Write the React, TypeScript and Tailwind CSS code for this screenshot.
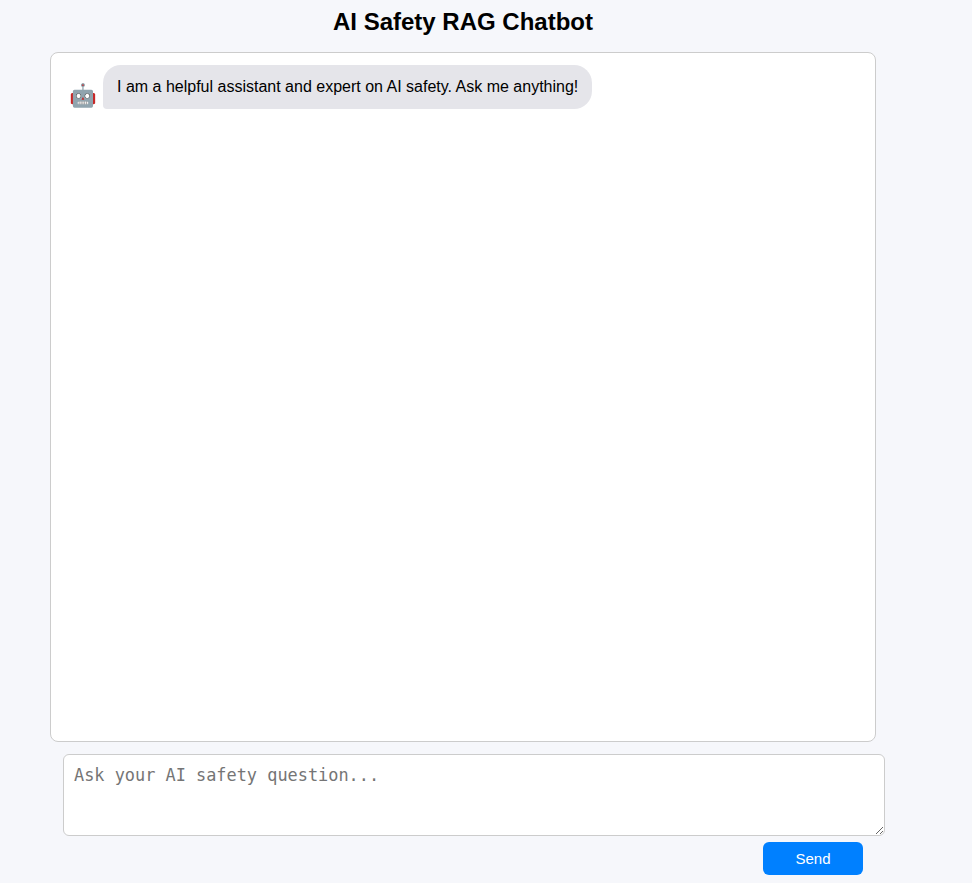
export default function App() {
  return (
    <div className="h-[883px] overflow-hidden bg-[#f6f7fb] font-['Liberation_Sans',Arial,sans-serif] text-black">
      <main className="ml-[50px] flex w-[826px] flex-col pt-2">
        <h1 className="mb-4 text-center text-2xl leading-7 font-bold">AI Safety RAG Chatbot</h1>
        <section className="h-[690px] rounded-lg border border-[#cccccc] bg-white p-3">
          <div className="flex items-end">
            <span className="flex w-10 justify-center text-[22.4px] leading-[26px]">🤖</span>
            <p className="rounded-[18px] rounded-bl-[4px] bg-[#e5e5ea] px-3.5 py-[10px] text-base leading-6">
              I am a helpful assistant and expert on AI safety. Ask me anything!
            </p>
          </div>
        </section>
        <form className="mt-3 ml-[13px] flex w-[822px] flex-col" onSubmit={(e) => e.preventDefault()}>
          <textarea
            className="block h-[82px] w-full resize rounded-md border border-[#cccccc] bg-white p-2.5 font-['DejaVu_Sans_Mono',monospace] text-[16.9px] leading-5 placeholder:text-[#757575]"
            placeholder="Ask your AI safety question..."
          />
          <button className="mt-1.5 mr-[22px] h-[33px] w-[100px] self-end rounded-md bg-[#0080ff] text-[15px] leading-[17px] text-white">
            Send
          </button>
        </form>
      </main>
    </div>
  );
}
